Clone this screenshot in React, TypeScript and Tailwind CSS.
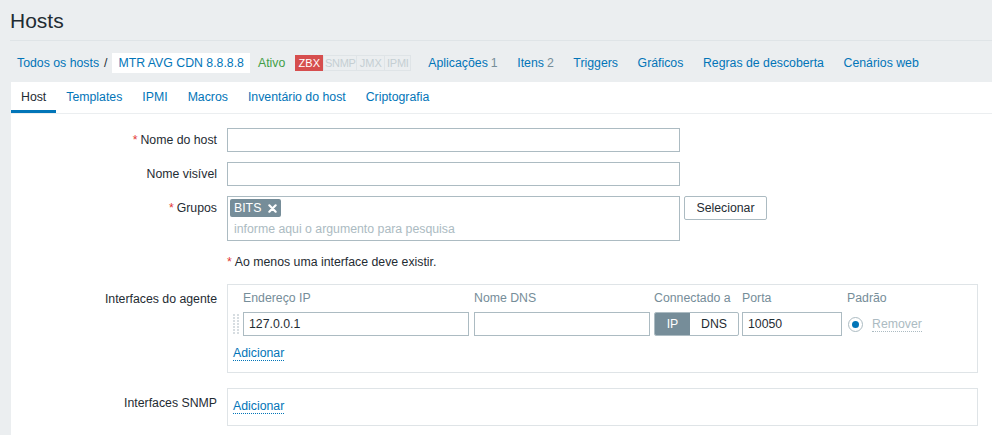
import React from 'react';

const navLinks: { label: string; count?: string }[] = [
  { label: 'Aplicações', count: '1' },
  { label: 'Itens', count: '2' },
  { label: 'Triggers' },
  { label: 'Gráficos' },
  { label: 'Regras de descoberta' },
  { label: 'Cenários web' },
];

const tabs = ['Host', 'Templates', 'IPMI', 'Macros', 'Inventário do host', 'Criptografia'];

const Required = () => <span className="text-[#e33734] mr-[3px]">*</span>;

// Linha do formulario: label a direita + campo
const FormRow = ({
  label,
  required,
  top,
  children,
  className = '',
}: {
  label: string;
  required?: boolean;
  top?: boolean;
  children: React.ReactNode;
  className?: string;
}) => (
  <div className={`flex ${className}`}>
    <div
      className={`w-[206px] shrink-0 flex justify-end ${
        top ? 'pt-[6px] items-start' : 'h-[24px] items-center'
      }`}
    >
      {required && <Required />}
      {label}
    </div>
    <div className="ml-[10px]">{children}</div>
  </div>
);

const TextInput = ({ width, value }: { width: string; value?: string }) => (
  <div className={`${width} h-[24px] border border-[#acbbc2] bg-white px-[5px] flex items-center`}>
    {value}
  </div>
);

const DragHandle = () => (
  <svg width="6" height="20" viewBox="0 0 6 20" className="block">
    {[0, 1, 2, 3, 4, 5, 6].map((i) => (
      <g key={i} fill="#d7dde1">
        <rect x="0" y={i * 3} width="2" height="2" />
        <rect x="4" y={i * 3} width="2" height="2" />
      </g>
    ))}
  </svg>
);

const AddLink = () => (
  <span className="text-[#0275b8] border-b border-dotted border-[#0275b8] leading-[14px]">Adicionar</span>
);

export default function App() {
  return (
    <div className="min-h-screen bg-[#ebeef0] font-['Liberation_Sans',Arial,sans-serif] text-[12.3px] text-[#1f2c33] overflow-hidden">
      {/* Cabecalho */}
      <header className="ml-[10px] h-[41px] border-b border-[#dfe4e7] flex items-center">
        <h1 className="text-[21px] leading-none">Hosts</h1>
      </header>

      {/* Navegacao do host */}
      <div className="h-[41px] flex items-start pt-[12px] pl-[17px] whitespace-nowrap">
        <div className="h-[20px] flex items-center">
          <span className="text-[#0275b8]">Todos os hosts</span>
          <span className="mx-[5px] text-[#1f2c33]">/</span>
          <span className="h-[20px] bg-white px-[6px] flex items-center text-[#0275b8]">MTR AVG CDN 8.8.8.8</span>
          <span className="ml-[8px] text-[#429e47]">Ativo</span>
          <div className="ml-[10px] flex h-[16px] text-[11px]">
            <span className="w-[28px] bg-[#d64e4e] text-white flex items-center justify-center border border-[#d64e4e]">ZBX</span>
            <span className="w-[34px] text-[#c5ced3] flex items-center justify-center border border-[#dfe4e7] tracking-[-0.3px]">SNMP</span>
            <span className="w-[28px] text-[#c5ced3] flex items-center justify-center border border-l-0 border-[#dfe4e7]">JMX</span>
            <span className="w-[26px] text-[#c5ced3] flex items-center justify-center border border-l-0 border-[#dfe4e7] tracking-[-0.3px]">IPMI</span>
          </div>
          <div className="ml-[17px] flex gap-[19.6px]">
            {navLinks.map((l) => (
              <span key={l.label} className="text-[#0275b8]">
                {l.label}
                {l.count && <span className="text-[#768d99] ml-[3px]">{l.count}</span>}
              </span>
            ))}
          </div>
        </div>
      </div>

      {/* Painel */}
      <div className="ml-[11px] bg-white min-h-[400px]">
        <div className="flex h-[32px] border-b border-[#ebeef0]">
          {tabs.map((t, i) => (
            <div
              key={t}
              className={`px-[10px] flex items-center pt-[2px] ${
                i === 0 ? 'border-b-[3px] border-[#0275b8] text-[#1f2c33]' : 'border-b-[3px] border-transparent text-[#0275b8]'
              }`}
            >
              {t}
            </div>
          ))}
        </div>

        <div className="pt-[14px] pb-[20px]">
          <FormRow label="Nome do host" required className="mb-[10px]">
            <TextInput width="w-[453px]" />
          </FormRow>
          <FormRow label="Nome visível" className="mb-[10px]">
            <TextInput width="w-[453px]" />
          </FormRow>
          <FormRow label="Grupos" required>
            <div className="flex items-start">
              <div className="w-[453px] h-[45px] border border-[#acbbc2] px-[2px] pt-[2px]">
                <span className="inline-flex items-center h-[18px] bg-[#768d99] text-white px-[4px] rounded-[2px]">
                  BITS
                  <svg width="9" height="9" viewBox="0 0 10 10" className="ml-[7px]">
                    <path d="M1.5 1.5 L8.5 8.5 M8.5 1.5 L1.5 8.5" stroke="white" strokeWidth="2.4" strokeLinecap="round" />
                  </svg>
                </span>
                <div className="pl-[4px] mt-[3px] text-[#acbbc2]">informe aqui o argumento para pesquisa</div>
              </div>
              <button className="ml-[4px] w-[83px] h-[24px] border border-[#acbbc2] rounded-[2px] bg-white text-[#1f2c33]">
                Selecionar
              </button>
            </div>
          </FormRow>

          <div className="ml-[216px] mt-[9px] h-[24px] flex items-center">
            <Required />
            Ao menos uma interface deve existir.
          </div>

          <FormRow label="Interfaces do agente" top className="mt-[10px]">
            <div className="w-[751px] border border-[#dfe4e7] px-[5px] pt-[4px] pb-[7px]">
              <div className="flex h-[18px] items-center text-[#768d99]">
                <span className="w-[10px]" />
                <span className="w-[231px]">Endereço IP</span>
                <span className="w-[180px]">Nome DNS</span>
                <span className="w-[88px]">Connectado a</span>
                <span className="w-[105px]">Porta</span>
                <span>Padrão</span>
              </div>
              <div className="flex items-center h-[24px] mt-[5px]">
                <span className="w-[10px]">
                  <DragHandle />
                </span>
                <TextInput width="w-[226px]" value="127.0.0.1" />
                <div className="ml-[5px]">
                  <TextInput width="w-[176px]" />
                </div>
                <div className="ml-[4px] flex h-[24px] w-[85px] border border-[#acbbc2] rounded-[2px] overflow-hidden">
                  <span className="w-[35px] bg-[#768d99] text-white flex items-center justify-center">IP</span>
                  <span className="flex-1 flex items-center justify-center">DNS</span>
                </div>
                <div className="ml-[3px]">
                  <TextInput width="w-[100px]" value="10050" />
                </div>
                <span className="ml-[6px] w-[15px] h-[15px] rounded-full border border-[#acbbc2] flex items-center justify-center">
                  <span className="w-[7px] h-[7px] rounded-full bg-[#0275b8]" />
                </span>
                <span className="ml-[9px] text-[#acbbc2] border-b border-dotted border-[#acbbc2] leading-[14px]">Remover</span>
              </div>
              <div className="h-[24px] mt-[5px] flex items-center">
                <AddLink />
              </div>
            </div>
          </FormRow>

          <FormRow label="Interfaces SNMP" top className="mt-[15px]">
            <div className="w-[751px] border border-[#dfe4e7] px-[5px] pt-[5px] pb-[7px]">
              <div className="h-[24px] flex items-center">
                <AddLink />
              </div>
            </div>
          </FormRow>
        </div>
      </div>
    </div>
  );
}
